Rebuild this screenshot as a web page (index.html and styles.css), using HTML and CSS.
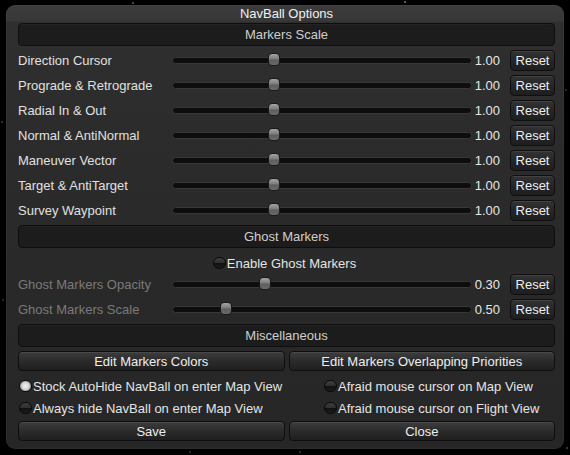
FILE: index.html
```html
<!DOCTYPE html>
<html>
<head>
<meta charset="utf-8">
<link rel="stylesheet" href="styles.css">
</head>
<body>
<div class="window">
  <div class="title">NavBall Options</div>

  <div class="section-header">Markers Scale</div>
  <div class="rows">
    <div class="row"><span class="label">Direction Cursor</span><div class="slider"><span class="thumb" style="left:95px"></span></div><span class="value">1.00</span><button class="reset">Reset</button></div>
    <div class="row"><span class="label">Prograde &amp; Retrograde</span><div class="slider"><span class="thumb" style="left:95px"></span></div><span class="value">1.00</span><button class="reset">Reset</button></div>
    <div class="row"><span class="label">Radial In &amp; Out</span><div class="slider"><span class="thumb" style="left:95px"></span></div><span class="value">1.00</span><button class="reset">Reset</button></div>
    <div class="row"><span class="label">Normal &amp; AntiNormal</span><div class="slider"><span class="thumb" style="left:95px"></span></div><span class="value">1.00</span><button class="reset">Reset</button></div>
    <div class="row"><span class="label">Maneuver Vector</span><div class="slider"><span class="thumb" style="left:95px"></span></div><span class="value">1.00</span><button class="reset">Reset</button></div>
    <div class="row"><span class="label">Target &amp; AntiTarget</span><div class="slider"><span class="thumb" style="left:95px"></span></div><span class="value">1.00</span><button class="reset">Reset</button></div>
    <div class="row"><span class="label">Survey Waypoint</span><div class="slider"><span class="thumb" style="left:95px"></span></div><span class="value">1.00</span><button class="reset">Reset</button></div>
  </div>

  <div class="section-header ghost-header">Ghost Markers</div>
  <div class="enable-row"><span class="check"></span><span class="check-text">Enable Ghost Markers</span></div>
  <div class="rows ghost-rows">
    <div class="row"><span class="label dim">Ghost Markers Opacity</span><div class="slider"><span class="thumb" style="left:86px"></span></div><span class="value">0.30</span><button class="reset">Reset</button></div>
    <div class="row"><span class="label dim">Ghost Markers Scale</span><div class="slider"><span class="thumb" style="left:47px"></span></div><span class="value">0.50</span><button class="reset">Reset</button></div>
  </div>

  <div class="section-header misc-header">Miscellaneous</div>
  <div class="button-row">
    <button class="btn">Edit Markers Colors</button>
    <button class="btn">Edit Markers Overlapping Priorities</button>
  </div>
  <div class="toggles">
    <div class="toggle"><span class="check on"></span><span class="check-text">Stock AutoHide NavBall on enter Map View</span></div>
    <div class="toggle"><span class="check"></span><span class="check-text">Afraid mouse cursor on Map View</span></div>
    <div class="toggle"><span class="check"></span><span class="check-text">Always hide NavBall on enter Map View</span></div>
    <div class="toggle"><span class="check"></span><span class="check-text">Afraid mouse cursor on Flight View</span></div>
  </div>
  <div class="button-row bottom-row">
    <button class="btn">Save</button>
    <button class="btn">Close</button>
  </div>
</div>
</body>
</html>
```

FILE: styles.css
```css
html, body {
  margin: 0;
  padding: 0;
}
body {
  width: 570px;
  height: 455px;
  overflow: hidden;
  font-family: "Liberation Sans", Arial, sans-serif;
  font-size: 13px;
  color: #e0e0e0;
  background-color: #000;
  background-image:
    radial-gradient(circle at 133px 3px, #8a8a8a 0, rgba(0,0,0,0) 1.5px),
    radial-gradient(circle at 405px 2px, #9aa 0, rgba(0,0,0,0) 1.5px),
    radial-gradient(circle at 2px 122px, #555 0, rgba(0,0,0,0) 1.5px),
    radial-gradient(circle at 567px 448px, #666 0, rgba(0,0,0,0) 1.5px),
    radial-gradient(circle at 300px 452px, #555 0, rgba(0,0,0,0) 1.5px),
    radial-gradient(circle at 3px 300px, #444 0, rgba(0,0,0,0) 1.5px),
    radial-gradient(circle at 566px 90px, #444 0, rgba(0,0,0,0) 1.5px),
    radial-gradient(circle at 190px 452px, #444 0, rgba(0,0,0,0) 1.5px);
}
.window {
  box-sizing: border-box;
  width: 558px;
  height: 444px;
  margin: 5px 0 0 6px;
  padding: 0 9px 0 12px;
  border-radius: 9px;
  background: linear-gradient(#3b3b3b 0, #383838 16px, #2f2f2f 17px, #2c2c2c 120px, #262626 100%);
  box-shadow: inset 0 0 0 1px rgba(255,255,255,0.03);
}
.title {
  height: 18px;
  line-height: 17px;
  text-align: center;
  color: #f0f0f0;
}
.section-header {
  box-sizing: border-box;
  height: 23px;
  line-height: 21px;
  text-align: center;
  color: #cfcfcf;
  background: #1c1c1c;
  border: 1px solid #0e0e0e;
  border-radius: 4px;
  box-shadow: inset 0 1px 0 rgba(255,255,255,0.03);
}
.rows {
  margin-top: 2px;
}
.row {
  display: flex;
  align-items: center;
  height: 25px;
}
.label {
  width: 154px;
  white-space: nowrap;
}
.label.dim {
  color: #7a7a7a;
}
.slider {
  position: relative;
  box-sizing: border-box;
  width: 300px;
  height: 7px;
  background: #0d0d0d;
  border: 1px solid #383838;
  border-radius: 4px;
}
.thumb {
  position: absolute;
  top: -5px;
  width: 12px;
  height: 13px;
  box-sizing: border-box;
  border-radius: 4px;
  border: 1px solid #1a1a1a;
  background: linear-gradient(#a4a4a4, #7c7c7c 45%, #5e5e5e 55%, #6a6a6a);
}
.value {
  width: 28px;
  text-align: right;
  color: #e6e6e6;
}
.reset {
  box-sizing: border-box;
  margin-left: 10px;
  width: 45px;
  height: 21px;
  padding: 0;
  font: inherit;
  color: #eeeeee;
  background: linear-gradient(#333333, #262626 50%, #1e1e1e);
  border: 1px solid #0f0f0f;
  border-radius: 4px;
  box-shadow: inset 0 1px 0 rgba(255,255,255,0.08);
}
.ghost-header {
  margin-top: 2px;
}
.enable-row {
  display: flex;
  justify-content: center;
  align-items: center;
  height: 14px;
  margin-top: 8px;
  padding-right: 4px;
}
.ghost-rows {
  margin-top: 2px;
}
.check {
  box-sizing: border-box;
  width: 13px;
  height: 12px;
  margin-right: 1px;
  border-radius: 6px;
  border: 1px solid #0a0a0a;
  background: linear-gradient(#3e3e3e, #303030 45%, #121212 55%, #1c1c1c);
  flex: none;
}
.check.on {
  background: radial-gradient(circle at 50% 50%, #f4f4f4 0, #dcdcdc 3px, #8e8e8e 6px);
}
.check-text {
  white-space: nowrap;
  color: #e4e4e4;
}
.misc-header {
  margin-top: 2px;
}
.button-row {
  display: grid;
  grid-template-columns: 1fr 1fr;
  column-gap: 4px;
  margin-top: 4px;
}
.btn {
  box-sizing: border-box;
  height: 20px;
  padding: 0;
  font: inherit;
  color: #eeeeee;
  background: linear-gradient(#3d3d3d, #2b2b2b 50%, #1f1f1f);
  border: 1px solid #0e0e0e;
  border-radius: 4px;
  box-shadow: inset 0 1px 0 rgba(255,255,255,0.07);
}
.toggles {
  display: grid;
  grid-template-columns: 305px auto;
  grid-auto-rows: 22px;
  margin-top: 4px;
}
.toggle {
  display: flex;
  align-items: center;
  padding-left: 1px;
}
.bottom-row {
  margin-top: 2px;
}
```
